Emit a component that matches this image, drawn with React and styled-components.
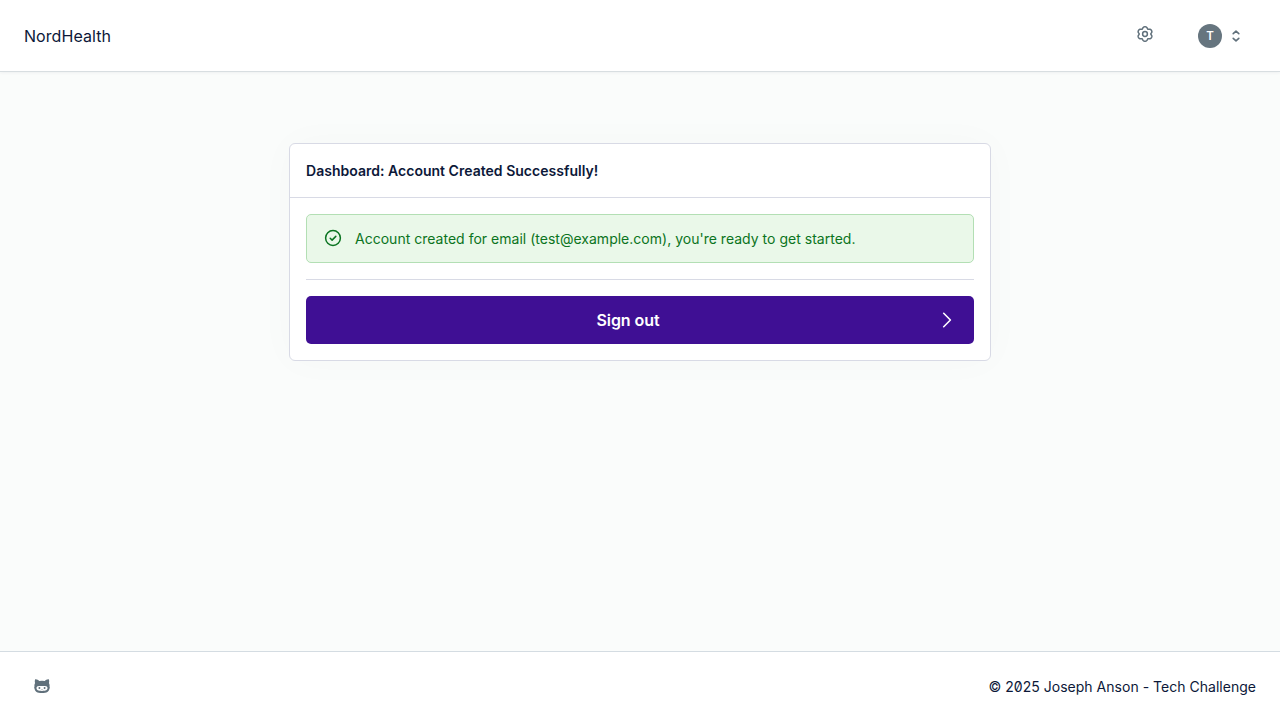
import React from "react";
import styled, { createGlobalStyle } from "styled-components";

const GlobalStyle = createGlobalStyle`
  *, *::before, *::after { box-sizing: border-box; }
  body {
    margin: 0;
    background: #fafcfb;
    color: #0c1839;
    font-family: Inter, "Liberation Sans", sans-serif;
    font-size: 14px;
    line-height: 20px;
    font-feature-settings: "zero" 1;
    -webkit-font-smoothing: antialiased;
  }
`;

const Page = styled.div`
  min-height: 100vh;
  display: flex;
  flex-direction: column;
`;

const Header = styled.header`
  height: 72px;
  padding: 0 24px;
  display: flex;
  align-items: center;
  justify-content: space-between;
  background: #fff;
  border-bottom: 1px solid #d8dee1;
  box-shadow: 0 1px 3px rgba(12, 24, 57, 0.05);
`;

const Brand = styled.div`
  font-size: 16px;
  line-height: 24px;
  letter-spacing: 0.06px;
  padding-top: 1px;
`;

const Actions = styled.div`
  display: flex;
  align-items: center;
  padding-right: 15px;
`;

const IconButton = styled.button`
  display: flex;
  padding: 0;
  margin: 0 45px 3px 0;
  border: 0;
  background: none;
  color: #60707b;
`;

const UserButton = styled(IconButton)`
  margin: 0;
  align-items: center;
  gap: 9px;
`;

const Avatar = styled.span`
  width: 24px;
  height: 24px;
  border-radius: 50%;
  display: flex;
  align-items: center;
  justify-content: center;
  background: #66757f;
  color: #fff;
  font: 600 11.5px/24px Inter, sans-serif;
`;

const Main = styled.main`
  flex: 1;
  padding-top: 71px;
`;

const Card = styled.section`
  width: 702px;
  margin: 0 auto;
  background: #fff;
  border: 1px solid #d8dae5;
  border-radius: 6px;
  box-shadow: 0 0 40px rgba(12, 50, 57, 0.022);
`;

const CardHeader = styled.h2`
  margin: 0;
  height: 54px;
  padding: 17px 16px 16px;
  border-bottom: 1px solid #d8dae5;
  font-size: 14px;
  line-height: 20px;
  font-weight: 600;
  letter-spacing: 0.02px;
`;

const CardBody = styled.div`
  padding: 16px;
`;

const Banner = styled.div`
  height: 49px;
  display: flex;
  align-items: center;
  padding: 0 16px 0 17px;
  gap: 13px;
  background: #eaf8e9;
  border: 1px solid #b3dfb4;
  border-radius: 5px;
  color: #0b7421;
  letter-spacing: 0.014px;
`;

const Divider = styled.hr`
  height: 1px;
  margin: 16px 0;
  border: 0;
  background: #d8dae5;
`;

const PrimaryButton = styled.button`
  width: 100%;
  height: 48px;
  display: flex;
  align-items: center;
  padding: 0 19px 0 20px;
  border: 0;
  border-radius: 5px;
  background: #3f0f94;
  color: #fff;
  font: 600 16px/24px Inter, sans-serif;
  letter-spacing: -0.08px;
`;

const ButtonLabel = styled.span`
  flex: 1;
  text-align: center;
  padding-right: 9px;
`;

const Footer = styled.footer`
  height: 69px;
  padding: 1px 24px 0 34px;
  display: flex;
  align-items: center;
  justify-content: space-between;
  background: #fff;
  border-top: 1px solid #d4dce2;
`;

const CatLink = styled.a`
  display: flex;
  margin-bottom: 2px;
  color: #60707b;
`;

const Copyright = styled.span`
  font-size: 14px;
  letter-spacing: 0.02px;
`;

const Glyph = styled.svg`
  display: block;
  flex: none;
  fill: none;
  stroke: currentColor;
  stroke-linecap: round;
  stroke-linejoin: round;
`;

const CheckGlyph = styled(Glyph)`
  margin-bottom: 1px;
`;

// Six-lobed outline, with one lobe pointing straight up.
const gearOutline = Array.from({ length: 72 }, (_, i) => {
  const angle = (i * Math.PI) / 36;
  const radius = 6.55 + 0.8 * Math.cos(6 * angle) - 0.18 * Math.cos(12 * angle);
  const x = 8 + radius * 1.04 * Math.sin(angle);
  const y = 8 - radius * Math.cos(angle);
  return `${x.toFixed(2)},${y.toFixed(2)}`;
}).join(" ");

function GearIcon() {
  return (
    <Glyph width="16" height="16" viewBox="0 0 16 16" strokeWidth="1.5">
      <polygon points={gearOutline} />
      <circle cx="8" cy="8" r="2.4" />
    </Glyph>
  );
}

function SelectorIcon() {
  return (
    <Glyph width="10" height="12" viewBox="0 0 10 12" strokeWidth="1.6">
      <path d="m2.2 3.7 2.8-2.5 2.8 2.5M2.2 8.3 5 10.8l2.8-2.5" />
    </Glyph>
  );
}

function CheckIcon() {
  return (
    <CheckGlyph width="18" height="18" viewBox="0 0 18 18" strokeWidth="1.5">
      <circle cx="9" cy="9" r="7.4" />
      <path d="m6.2 9.3 1.9 1.8 3.7-3.7" />
    </CheckGlyph>
  );
}

function ChevronIcon() {
  return (
    <Glyph width="16" height="16" viewBox="0 0 16 16" strokeWidth="1.6">
      <path d="m4.7 1.3 6.7 6.7-6.7 6.7" />
    </Glyph>
  );
}

function CatIcon() {
  return (
    <Glyph width="16" height="16" viewBox="0 0 16 16">
      <path
        fill="currentColor"
        stroke="none"
        fillRule="evenodd"
        d="M1.2 1.3C2.7 1 4.2 1.9 5.2 3a20 20 0 0 1 5.6 0c1-1.1 2.5-2 4-1.7.5 1.5.5 2.7.1 3.7.5.7.7 1.5.7 2.5 0 .7 0 1.3-.1 1.9h.5v.8h-.5c-.4 3.3-2.6 4.8-7.5 4.8S.9 13.5.5 10.2H0v-.8h.5c-.1-.6-.1-1.2-.1-1.9 0-1 .2-1.8.7-2.5C.7 4 .7 2.8 1.2 1.3ZM5 8c-1.700 0-2.500.8-2.500 2.100 0 2.100 1.500 2.900 5.500 2.900s5.500-.8 5.500-2.900C13.500 8.800 12.700 8 11 8H5Z"
      />
      <g fill="currentColor" stroke="none">
        <ellipse cx="5.4" cy="10" rx=".95" ry="1.1" />
        <ellipse cx="10.6" cy="10" rx=".95" ry="1.1" />
        <path d="M7.2 11.2h1.6L8 11.9Z" />
      </g>
    </Glyph>
  );
}

export default function App() {
  return (
    <Page>
      <GlobalStyle />
      <Header>
        <Brand>NordHealth</Brand>
        <Actions>
          <IconButton aria-label="Settings"><GearIcon /></IconButton>
          <UserButton aria-label="Account menu">
            <Avatar>T</Avatar>
            <SelectorIcon />
          </UserButton>
        </Actions>
      </Header>
      <Main>
        <Card>
          <CardHeader>Dashboard: Account Created Successfully!</CardHeader>
          <CardBody>
            <Banner>
              <CheckIcon />
              <span>Account created for email (test@example.com), you're ready to get started.</span>
            </Banner>
            <Divider />
            <PrimaryButton>
              <ButtonLabel>Sign out</ButtonLabel>
              <ChevronIcon />
            </PrimaryButton>
          </CardBody>
        </Card>
      </Main>
      <Footer>
        <CatLink aria-label="Source code"><CatIcon /></CatLink>
        <Copyright>© 2025 Joseph Anson - Tech Challenge</Copyright>
      </Footer>
    </Page>
  );
}
